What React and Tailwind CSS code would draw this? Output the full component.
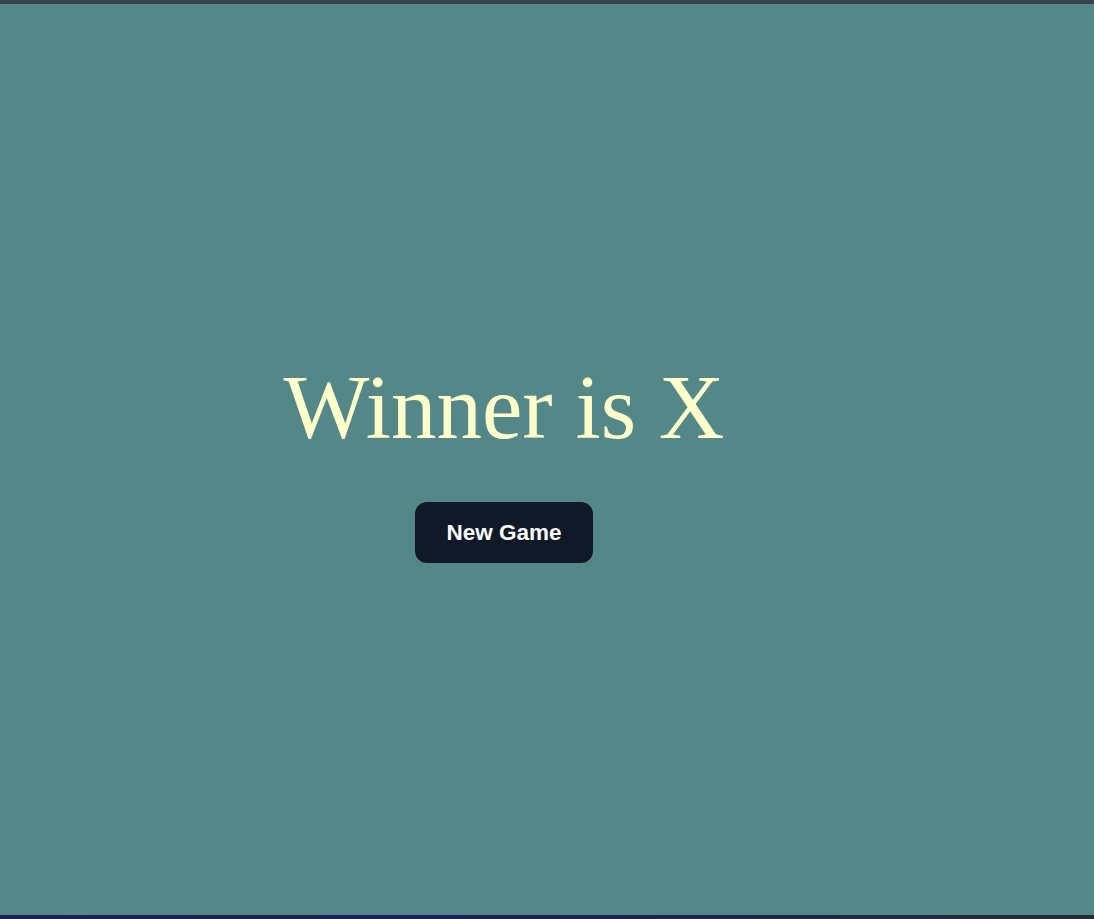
export default function App() {
  return (
    <div className="flex h-[919px] w-full flex-col bg-[#548787]">
      <div className="h-[4px] w-full bg-[#3a3f4e]" />
      <main className="flex flex-1 items-center">
        <div className="flex w-[1008px] flex-col items-center pt-[7px]">
          <h1
            className="text-[91px] leading-[90px] text-[#ffffcc]"
            style={{ fontFamily: '"Liberation Serif", "Times New Roman", serif' }}
          >
            Winner is X
          </h1>
          <button
            className="mt-[49px] h-[61px] rounded-xl bg-[#111827] px-[31px] text-[22.5px] font-bold text-white"
            style={{ fontFamily: '"Liberation Sans", Arial, sans-serif' }}
          >
            New Game
          </button>
        </div>
      </main>
      <div className="h-[4px] w-full bg-gradient-to-r from-[#16205a] via-[#1a2450] to-[#262b3a]" />
    </div>
  );
}
